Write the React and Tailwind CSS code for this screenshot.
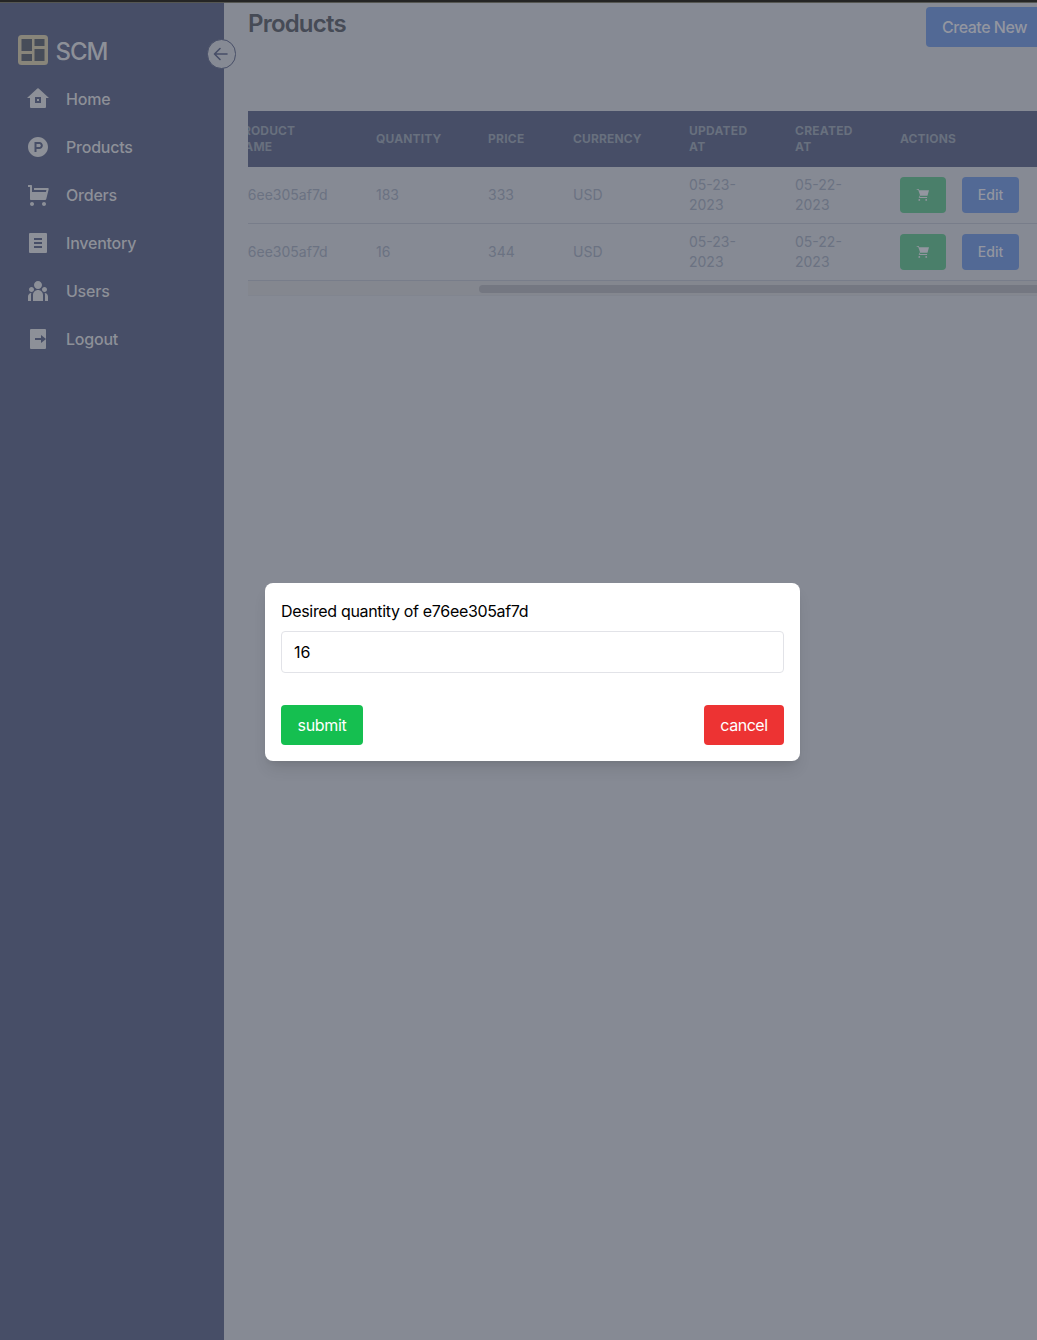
import { RiShoppingCartFill, RiTeamFill, RiProductHuntFill } from "react-icons/ri";

function Icon({ d }) {
  return (
    <svg width="24" height="24" viewBox="0 0 24 24" fill="currentColor" className="shrink-0">
      <path fillRule="evenodd" d={d} />
    </svg>
  );
}

const nav = [
  { label: "Home", icon: <Icon d="M19 21H5a1 1 0 0 1-1-1v-9H1l10.327-9.388a1 1 0 0 1 1.346 0L23 11h-3v9a1 1 0 0 1-1 1ZM9 10v6h6v-6H9Zm2 2h2v2h-2v-2Z" /> },
  { label: "Products", icon: <RiProductHuntFill size={24} className="shrink-0" /> },
  { label: "Orders", icon: <RiShoppingCartFill size={24} className="shrink-0" /> },
  { label: "Inventory", icon: <Icon d="M4 2h16a1 1 0 0 1 1 1v18a1 1 0 0 1-1 1H4a1 1 0 0 1-1-1V3a1 1 0 0 1 1-1Zm4 5v2h8V7H8Zm0 4v2h8v-2H8Zm0 4v2h8v-2H8Z" /> },
  { label: "Users", icon: <RiTeamFill size={24} className="shrink-0" /> },
  { label: "Logout", icon: <Icon d="M5 2h14a1 1 0 0 1 1 1v18a1 1 0 0 1-1 1H5a1 1 0 0 1-1-1V3a1 1 0 0 1 1-1Zm10 9H9v2h6v3l5-4-5-4v3Z" /> },
];

const rows = [
  ["183", "333"],
  ["16", "344"],
];

const cell = "border-b border-[#787d8a] pl-6";

export default function App() {
  return (
    <div className="relative h-[1340px] w-[1037px] overflow-hidden bg-[#868a94] font-['Inter',sans-serif] text-base">
      <div className="h-[3px] border-b border-[#555652] bg-[#252525]" />
      <div className="flex h-[1337px]">
        <aside className="relative w-56 shrink-0 bg-[#474e67] text-[#8d9098]">
          <div className="flex h-[72px] items-center pt-[22px] pl-[18px]">
            <svg width="30" height="30" viewBox="0 0 30 30">
              <rect width="30" height="30" rx="3.5" fill="#88857a" />
              <path fill="#474d59" d="M3.5 4H14v12H3.5ZM16.5 4h10v7h-10ZM3.5 19H14v7H3.5ZM16.500 14h10v12h-10Z" />
            </svg>
            <span className="ml-[7.5px] pt-[3px] text-2xl font-medium tracking-[-1.1px]">SCM</span>
          </div>
          <nav className="flex flex-col">
            {nav.map((n) => (
              <a key={n.label} className="flex h-12 items-center gap-4 pl-[26px] font-medium tracking-[-0.22px]">
                {n.icon}
                {n.label}
              </a>
            ))}
          </nav>
          <div className="absolute top-[36px] left-[206.5px] flex size-[29.5px] items-center justify-center rounded-full border border-[#474e67] bg-[#868a94]">
            <svg width="16" height="16" viewBox="0 0 16 16" fill="none" stroke="#474e67" strokeWidth="1.6" strokeLinecap="round" strokeLinejoin="round">
              <path d="M14 8H1.500M7 2.500 1.500 8 7 13.500" />
            </svg>
          </div>
        </aside>
        <main className="min-w-0 flex-1 overflow-hidden pl-6">
          <div className="flex h-[108px] w-[813px] items-start justify-between">
            <h1 className="pt-[5px] text-2xl font-semibold leading-8 tracking-[-0.8px] text-[#464b56]">Products</h1>
            <button className="mt-1 h-10 w-[135px] shrink-0 rounded-[4px] bg-[#526995] pl-4 text-left font-medium tracking-[-0.48px] text-[#9396a0]">Create New</button>
          </div>
          <div className="overflow-hidden">
            <table className="-ml-[22px] w-[850px] table-fixed border-separate border-spacing-0 text-left">
              <colgroup>
                <col className="w-[126px]" /><col className="w-[112px]" /><col className="w-[85px]" /><col className="w-[116px]" /><col className="w-[106px]" /><col className="w-[105px]" /><col className="w-[200px]" />
              </colgroup>
              <thead className="bg-[#474e67] text-xs font-bold tracking-[0.14px] text-[#68707e]">
                <tr className="h-14">
                  <th className="pl-[9px]">PRODUCT<br />NAME</th>
                  <th className="pl-6">QUANTITY</th><th className="pl-6 tracking-[0.25px]">PRICE</th><th className="pl-6">CURRENCY</th>
                  <th className="pl-6 tracking-[0.25px]">UPDATED<br />AT</th><th className="pl-6 tracking-[0.25px]">CREATED<br />AT</th><th className="pl-6">ACTIONS</th>
                </tr>
              </thead>
              <tbody className="text-sm text-[#6b7282]">
                {rows.map(([q, p]) => (
                  <tr key={q} className="h-[57px]">
                    <td className="border-b border-[#787d8a] pl-[6px]">e76ee305af7d</td>
                    <td className={cell}>{q}</td><td className={cell}>{p}</td><td className={cell}>USD</td>
                    <td className={cell}>05-23-<br />2023</td><td className={cell}>05-22-<br />2023</td>
                    <td className={cell}>
                      <div className="flex gap-4 text-[#9396a0]">
                        <button className="flex h-9 w-[46px] items-center justify-center rounded-[4px] bg-[#4a7f6a]">
                          <svg width="14" height="14" viewBox="0 0 14 14" fill="currentColor">
                            <path d="M.7 1h2l.5 1.200H13L11.500 7.800H4.200L2.200 1.800H.7ZM3.200 9h7.900v.9H3.200Z" />
                            <path d="M3.900 7.500 3.200 9.500" stroke="currentColor" strokeWidth=".7" />
                            <circle cx="3.300" cy="11.900" r=".9" /><circle cx="10.200" cy="11.900" r=".9" />
                          </svg>
                        </button>
                        <button className="h-9 w-[57px] rounded-[4px] bg-[#526995] font-medium">Edit</button>
                      </div>
                    </td>
                  </tr>
                ))}
              </tbody>
            </table>
            <div className="h-[15px] border-b border-[#81858f] bg-[#84878f] pt-1">
              <div className="ml-[231px] h-2 rounded-l-full bg-[#747781]" />
            </div>
          </div>
        </main>
      </div>
      <div className="absolute top-[583px] left-[265px] flex h-[178px] w-[535px] flex-col rounded-lg bg-white p-4 text-black shadow-lg">
        <label className="leading-6 tracking-[-0.33px]">Desired quantity of e76ee305af7d</label>
        <div className="mt-2 flex h-[42px] shrink-0 items-center rounded border border-[#e2e3e8] px-3">16</div>
        <div className="mt-8 flex justify-between text-white">
          <button className="h-10 w-[82px] rounded-[4px] bg-[#15bf50] tracking-[-0.3px]">submit</button>
          <button className="h-10 w-20 rounded-[4px] bg-[#ed3333] tracking-[-0.45px]">cancel</button>
        </div>
      </div>
    </div>
  );
}
